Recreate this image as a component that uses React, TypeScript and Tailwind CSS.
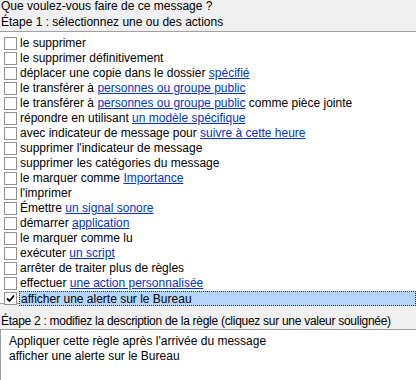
import { Fragment } from 'react';

type Part = { t: string; link?: boolean };

const actions: Part[][] = [
  [{ t: 'le supprimer' }],
  [{ t: 'le supprimer définitivement' }],
  [{ t: 'déplacer une copie dans le dossier ' }, { t: 'spécifié', link: true }],
  [{ t: 'le transférer à ' }, { t: 'personnes ou groupe public', link: true }],
  [
    { t: 'le transférer à ' },
    { t: 'personnes ou groupe public', link: true },
    { t: ' comme pièce jointe' },
  ],
  [{ t: 'répondre en utilisant ' }, { t: 'un modèle spécifique', link: true }],
  [{ t: 'avec indicateur de message pour ' }, { t: 'suivre à cette heure', link: true }],
  [{ t: "supprimer l'indicateur de message" }],
  [{ t: 'supprimer les catégories du message' }],
  [{ t: 'le marquer comme ' }, { t: 'Importance', link: true }],
  [{ t: "l'imprimer" }],
  [{ t: 'Émettre ' }, { t: 'un signal sonore', link: true }],
  [{ t: 'démarrer ' }, { t: 'application', link: true }],
  [{ t: 'le marquer comme lu' }],
  [{ t: 'exécuter ' }, { t: 'un script', link: true }],
  [{ t: 'arrêter de traiter plus de règles' }],
  [{ t: 'effectuer ' }, { t: 'une action personnalisée', link: true }],
  [{ t: 'afficher une alerte sur le Bureau' }],
];

function Check({ on }: { on?: boolean }) {
  return (
    <span className="w-[13px] h-[13px] shrink-0 border border-[#8f8f8f] bg-white flex items-center justify-center">
      {on && (
        <svg width="9" height="9" viewBox="0 0 9 9">
          <path d="M1 4.5 L3.5 7 L8 1.5" stroke="#000" strokeWidth="1.8" fill="none" />
        </svg>
      )}
    </span>
  );
}

export default function App() {
  return (
    <div
      className="w-[416px] h-[380px] bg-[#f0f0f0] text-[12px] text-black overflow-hidden flex flex-col"
      style={{ fontFamily: '"Liberation Sans", Arial, sans-serif' }}
    >
      <div className="h-[15px] leading-[13px] pl-[1px]">Que voulez-vous faire de ce message ?</div>
      <div className="h-[16px] leading-[14px] pl-[1px]">Étape 1 : sélectionnez une ou des actions</div>

      <div className="h-[273px] bg-white border-t border-t-[#a0a0a0] border-b border-b-[#a0a0a0] pt-[4px]">
        {actions.map((row, i) => {
          const last = i === actions.length - 1;
          return (
            <div key={i} className="h-[15px] flex items-center pl-[4px]">
              <Check on={last} />
              <div
                className={
                  'ml-[2px] h-[15px] leading-[14px] pl-[1px] flex-1 whitespace-nowrap ' +
                  (last ? 'bg-[#b5d5f9] border border-dotted border-[#333] leading-[12px]' : '')
                }
              >
                {row.map((p, j) => (
                  <Fragment key={j}>
                    {p.link ? (
                      <span className="text-[#0033cc] underline underline-offset-1">{p.t}</span>
                    ) : (
                      p.t
                    )}
                  </Fragment>
                ))}
              </div>
            </div>
          );
        })}
      </div>

      <div className="h-[25px] pt-[10px] leading-[14px] pl-[1px] tracking-[-0.28px] whitespace-nowrap">
        Étape 2 : modifiez la description de la règle (cliquez sur une valeur soulignée)
      </div>

      <div className="flex-1 bg-white border-t border-l border-[#a0a0a0] pt-[4px] pl-[8px] leading-[15px]">
        <div>Appliquer cette règle après l'arrivée du message</div>
        <div>afficher une alerte sur le Bureau</div>
      </div>
    </div>
  );
}
